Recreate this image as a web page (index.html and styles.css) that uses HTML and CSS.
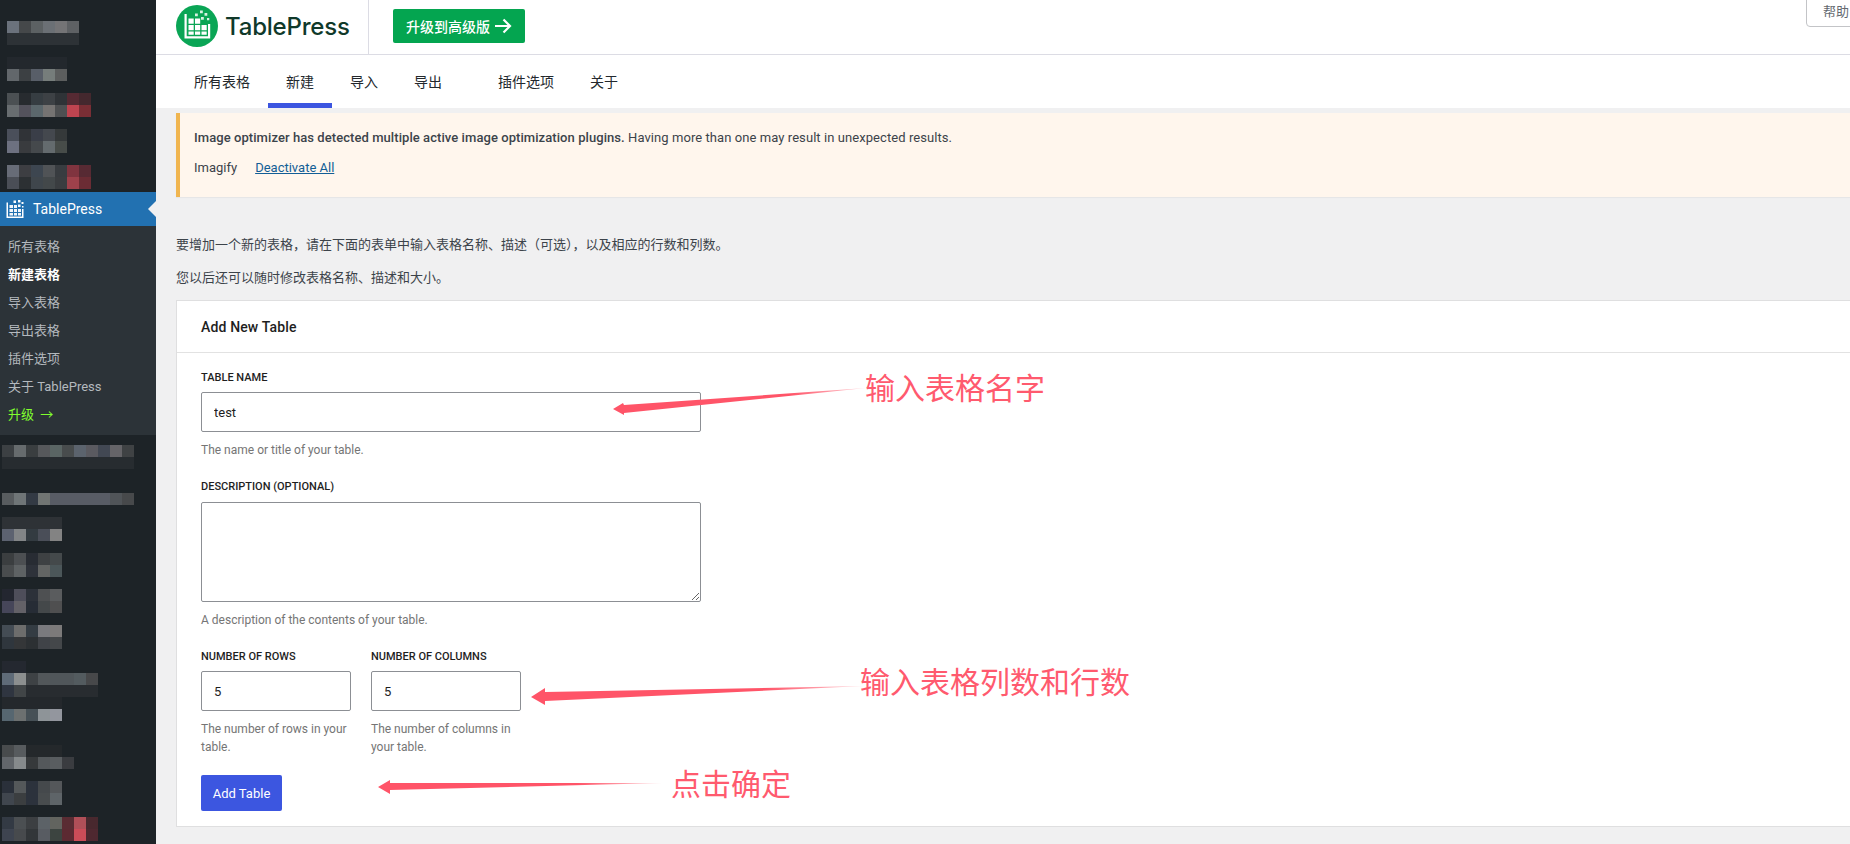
FILE: index.html
```html
<!DOCTYPE html>
<html lang="zh-CN">
<head>
  <meta charset="UTF-8" />
  <meta name="viewport" content="width=device-width, initial-scale=1.0"/>
  <title>新建表格 - TablePress</title>
  <link rel="stylesheet" href="styles.css">
</head>
<body>
  <aside class="sidebar">
    <svg class="mosaic" width="156" height="192" viewBox="0 0 156 192">
      <rect x="7" y="21" width="12" height="12" fill="#6b727c"/><rect x="19" y="21" width="12" height="12" fill="#45484a"/><rect x="31" y="21" width="12" height="12" fill="#5c6163"/><rect x="43" y="21" width="12" height="12" fill="#6b7075"/><rect x="55" y="21" width="12" height="12" fill="#747476"/><rect x="67" y="21" width="12" height="12" fill="#5e6164"/>
      <rect x="7" y="33" width="72" height="12" fill="#2d3236"/>
      <rect x="7" y="57" width="60" height="12" fill="#23282d"/>
      <rect x="7" y="69" width="12" height="12" fill="#62676b"/><rect x="19" y="69" width="12" height="12" fill="#3c4043"/><rect x="31" y="69" width="12" height="12" fill="#585e68"/><rect x="43" y="69" width="12" height="12" fill="#767d7b"/><rect x="55" y="69" width="12" height="12" fill="#5c5e5e"/>
      <rect x="7" y="93" width="12" height="12" fill="#4b5053"/><rect x="19" y="93" width="12" height="12" fill="#272b2f"/><rect x="31" y="93" width="12" height="12" fill="#363d42"/><rect x="43" y="93" width="12" height="12" fill="#3d4145"/><rect x="55" y="93" width="12" height="12" fill="#2f3337"/><rect x="67" y="93" width="12" height="12" fill="#562a33"/><rect x="79" y="93" width="12" height="12" fill="#44282e"/>
      <rect x="7" y="105" width="12" height="12" fill="#686d70"/><rect x="19" y="105" width="12" height="12" fill="#53525c"/><rect x="31" y="105" width="12" height="12" fill="#5b676c"/><rect x="43" y="105" width="12" height="12" fill="#757372"/><rect x="55" y="105" width="12" height="12" fill="#4e5052"/><rect x="67" y="105" width="12" height="12" fill="#bf4450"/><rect x="79" y="105" width="12" height="12" fill="#7a2e35"/>
      <rect x="7" y="129" width="12" height="12" fill="#4a4f5a"/><rect x="19" y="129" width="12" height="12" fill="#303337"/><rect x="31" y="129" width="12" height="12" fill="#3a3e48"/><rect x="43" y="129" width="12" height="12" fill="#44484e"/><rect x="55" y="129" width="12" height="12" fill="#35393a"/>
      <rect x="7" y="141" width="12" height="12" fill="#6d7180"/><rect x="19" y="141" width="12" height="12" fill="#393b3e"/><rect x="31" y="141" width="12" height="12" fill="#45494c"/><rect x="43" y="141" width="12" height="12" fill="#646b6e"/><rect x="55" y="141" width="12" height="12" fill="#474c49"/>
      <rect x="7" y="165" width="12" height="12" fill="#676c77"/><rect x="19" y="165" width="12" height="12" fill="#3d3e42"/><rect x="31" y="165" width="12" height="12" fill="#3d4650"/><rect x="43" y="165" width="12" height="12" fill="#505356"/><rect x="55" y="165" width="12" height="12" fill="#383c40"/><rect x="67" y="165" width="12" height="12" fill="#80343f"/><rect x="79" y="165" width="12" height="12" fill="#572a33"/>
      <rect x="7" y="177" width="12" height="12" fill="#4a4e56"/><rect x="19" y="177" width="12" height="12" fill="#2c3033"/><rect x="31" y="177" width="12" height="12" fill="#3f464c"/><rect x="43" y="177" width="12" height="12" fill="#43484a"/><rect x="55" y="177" width="12" height="12" fill="#3a3d40"/><rect x="67" y="177" width="12" height="12" fill="#9e414b"/><rect x="79" y="177" width="12" height="12" fill="#6b2c34"/>
    </svg>

    <div class="menu-current">
      <svg class="menu-icon" width="18" height="18" viewBox="0 0 18 18">
        <path d="M0.500 2.500h1.500v14h14V9h1.500v9H.5z" fill="#fff"/>
        <path d="M3.500 5h3.500v3H3.500zM8 5h3v3H8zM3.500 9h3.500v3H3.500zM8 9h3v3H8zM12 9h3v3h-3zM3.500 13h3.500v2.500H3.500zM8 13h3v2.500H8zM12 13h3v2.500h-3z" fill="#f2f6fa"/>
        <path d="M7.500 .5h2.500v2.500H7.500zM12 0h2.500v2.500H12zM15.500 2h2v2h-2zM12 4.500h2.500V7H12zM16 6h1.500v1.500H16z" fill="#fff"/>
      </svg>
      <span>TablePress</span>
    </div>
    <ul class="submenu">
      <li>所有表格</li>
      <li class="current">新建表格</li>
      <li>导入表格</li>
      <li>导出表格</li>
      <li>插件选项</li>
      <li>关于 TablePress</li>
      <li class="upgrade">升级 <span class="upgrade-arrow">→</span></li>
    </ul>

    <svg class="mosaic" width="156" height="409" viewBox="0 435 156 409">
      <rect x="2" y="445" width="12" height="12" fill="#3c4043"/><rect x="14" y="445" width="12" height="12" fill="#666b6d"/><rect x="26" y="445" width="12" height="12" fill="#3a3e40"/><rect x="38" y="445" width="12" height="12" fill="#56585b"/><rect x="50" y="445" width="12" height="12" fill="#5a6564"/><rect x="62" y="445" width="12" height="12" fill="#484c4d"/><rect x="74" y="445" width="12" height="12" fill="#5b636d"/><rect x="86" y="445" width="12" height="12" fill="#5a5a60"/><rect x="98" y="445" width="12" height="12" fill="#424853"/><rect x="110" y="445" width="12" height="12" fill="#656468"/><rect x="122" y="445" width="12" height="12" fill="#3f4244"/>
      <rect x="2" y="457" width="132" height="12" fill="#272c30"/>
      <rect x="2" y="493" width="12" height="12" fill="#585c5f"/><rect x="14" y="493" width="12" height="12" fill="#6f7577"/><rect x="26" y="493" width="12" height="12" fill="#333a44"/><rect x="38" y="493" width="12" height="12" fill="#717573"/><rect x="50" y="493" width="60" height="12" fill="#585c65"/><rect x="110" y="493" width="12" height="12" fill="#505458"/><rect x="122" y="493" width="12" height="12" fill="#47494b"/>
      <rect x="2" y="517" width="60" height="12" fill="#2e3236"/>
      <rect x="2" y="529" width="12" height="12" fill="#5c6270"/><rect x="14" y="529" width="12" height="12" fill="#828587"/><rect x="26" y="529" width="12" height="12" fill="#333b41"/><rect x="38" y="529" width="12" height="12" fill="#4a4e58"/><rect x="50" y="529" width="12" height="12" fill="#838383"/>
      <rect x="2" y="553" width="12" height="12" fill="#3b3e40"/><rect x="14" y="553" width="12" height="12" fill="#4c4f52"/><rect x="26" y="553" width="12" height="12" fill="#282c33"/><rect x="38" y="553" width="12" height="12" fill="#3e4143"/><rect x="50" y="553" width="12" height="12" fill="#44494b"/>
      <rect x="2" y="565" width="12" height="12" fill="#494c4e"/><rect x="14" y="565" width="12" height="12" fill="#5e6264"/><rect x="26" y="565" width="12" height="12" fill="#2e323a"/><rect x="38" y="565" width="12" height="12" fill="#636564"/><rect x="50" y="565" width="12" height="12" fill="#4b5659"/>
      <rect x="2" y="589" width="12" height="12" fill="#232630"/><rect x="14" y="589" width="12" height="12" fill="#4e4e5a"/><rect x="26" y="589" width="12" height="12" fill="#2c3139"/><rect x="38" y="589" width="12" height="12" fill="#4e5052"/><rect x="50" y="589" width="12" height="12" fill="#5a5c5e"/>
      <rect x="2" y="601" width="12" height="12" fill="#464659"/><rect x="14" y="601" width="12" height="12" fill="#636167"/><rect x="26" y="601" width="12" height="12" fill="#262c35"/><rect x="38" y="601" width="12" height="12" fill="#44484a"/><rect x="50" y="601" width="12" height="12" fill="#4f4f50"/>
      <rect x="2" y="625" width="12" height="12" fill="#444c54"/><rect x="14" y="625" width="12" height="12" fill="#6d6d6c"/><rect x="26" y="625" width="12" height="12" fill="#343c43"/><rect x="38" y="625" width="12" height="12" fill="#7a7a7e"/><rect x="50" y="625" width="12" height="12" fill="#7c7a7a"/>
      <rect x="2" y="637" width="12" height="12" fill="#2f363d"/><rect x="14" y="637" width="12" height="12" fill="#343638"/><rect x="26" y="637" width="12" height="12" fill="#2c3033"/><rect x="38" y="637" width="12" height="12" fill="#404348"/><rect x="50" y="637" width="12" height="12" fill="#44474a"/>
      <rect x="2" y="661" width="24" height="12" fill="#242830"/>
      <rect x="2" y="673" width="12" height="12" fill="#5f6b78"/><rect x="14" y="673" width="12" height="12" fill="#8c8f8f"/><rect x="26" y="673" width="12" height="12" fill="#3e4245"/><rect x="38" y="673" width="12" height="12" fill="#52575a"/><rect x="50" y="673" width="24" height="12" fill="#50565a"/><rect x="74" y="673" width="12" height="12" fill="#535b5f"/><rect x="86" y="673" width="12" height="12" fill="#47484a"/>
      <rect x="2" y="685" width="12" height="12" fill="#2f3540"/><rect x="14" y="685" width="12" height="12" fill="#414547"/><rect x="26" y="685" width="72" height="12" fill="#282c30"/>
      <rect x="2" y="697" width="60" height="12" fill="#24282c"/>
      <rect x="2" y="709" width="12" height="12" fill="#566670"/><rect x="14" y="709" width="12" height="12" fill="#6c7070"/><rect x="26" y="709" width="12" height="12" fill="#465056"/><rect x="38" y="709" width="12" height="12" fill="#8e9498"/><rect x="50" y="709" width="12" height="12" fill="#93969e"/>
      <rect x="2" y="745" width="12" height="12" fill="#484b4d"/><rect x="14" y="745" width="12" height="12" fill="#575b5e"/><rect x="26" y="745" width="36" height="12" fill="#24282b"/>
      <rect x="2" y="757" width="12" height="12" fill="#62666b"/><rect x="14" y="757" width="12" height="12" fill="#868a8c"/><rect x="26" y="757" width="12" height="12" fill="#36393b"/><rect x="38" y="757" width="12" height="12" fill="#54585b"/><rect x="50" y="757" width="12" height="12" fill="#595d60"/><rect x="62" y="757" width="12" height="12" fill="#3a3c40"/>
      <rect x="2" y="781" width="12" height="12" fill="#2a303a"/><rect x="14" y="781" width="12" height="12" fill="#54585a"/><rect x="26" y="781" width="12" height="12" fill="#2c323c"/><rect x="38" y="781" width="12" height="12" fill="#45494c"/><rect x="50" y="781" width="12" height="12" fill="#54575a"/>
      <rect x="2" y="793" width="12" height="12" fill="#40464e"/><rect x="14" y="793" width="12" height="12" fill="#3b3e40"/><rect x="26" y="793" width="12" height="12" fill="#2c323c"/><rect x="38" y="793" width="12" height="12" fill="#484c4e"/><rect x="50" y="793" width="12" height="12" fill="#5e6468"/>
      <rect x="2" y="817" width="12" height="12" fill="#333a44"/><rect x="14" y="817" width="12" height="12" fill="#4b4f52"/><rect x="26" y="817" width="12" height="12" fill="#3c3f42"/><rect x="38" y="817" width="12" height="12" fill="#5c6267"/><rect x="50" y="817" width="12" height="12" fill="#62645f"/><rect x="62" y="817" width="12" height="12" fill="#5a2c33"/><rect x="74" y="817" width="12" height="12" fill="#b04f58"/><rect x="86" y="817" width="12" height="12" fill="#48282e"/>
      <rect x="2" y="829" width="12" height="12" fill="#3e4450"/><rect x="14" y="829" width="12" height="12" fill="#474a4d"/><rect x="26" y="829" width="12" height="12" fill="#323639"/><rect x="38" y="829" width="12" height="12" fill="#585c62"/><rect x="50" y="829" width="12" height="12" fill="#3c4440"/><rect x="62" y="829" width="12" height="12" fill="#5c2a32"/><rect x="74" y="829" width="12" height="12" fill="#cb4c58"/><rect x="86" y="829" width="12" height="12" fill="#4e2830"/>
    </svg>
  </aside>

  <div class="main">
    <header class="topbar">
      <div class="brand">
        <svg class="logo" width="42" height="42" viewBox="0 0 42 42">
          <circle cx="21" cy="21" r="21" fill="#0aa555"/>
          <path d="M8.500 9h2.200v22.300H32V19h2.200v14.500H8.500z" fill="#fff"/>
          <path d="M12.500 13.500h5.200v5.200h-5.200zM19 13.500h5.200v5.200H19zM12.500 20h5.200v5.200h-5.200zM19 20h5.200v5.200H19zM25.500 20h5.200v5.200h-5.200zM12.500 26.500h5.200v3.200h-5.200zM19 26.500h5.200v3.200H19zM25.500 26.500h5.200v3.200h-5.200z" fill="#fff"/>
          <path d="M19 8.500h2.800v2.800H19zM24 5.500h2.800v2.800H24zM28.500 8h2.800v2.800h-2.800zM25 12h2.800v2.800H25zM31 13h2.300v2.300H31z" fill="#d8f2e3"/>
        </svg>
        <span class="brand-name">TablePress</span>
      </div>
      <a class="btn-upgrade">升级到高级版
        <svg width="17" height="16" viewBox="0 0 17 16"><path d="M0 8h15M8.500 1.500 15 8l-6.500 6.500" fill="none" stroke="#fff" stroke-width="2.200"/></svg>
      </a>
      <div class="help-tab">帮助</div>
    </header>

    <nav class="tabs">
      <a class="tab">所有表格</a>
      <a class="tab active">新建</a>
      <a class="tab">导入</a>
      <a class="tab">导出</a>
      <span class="tab-gap"></span>
      <a class="tab">插件选项</a>
      <a class="tab">关于</a>
    </nav>

    <div class="content">
      <div class="notice">
        <p class="notice-msg"><strong>Image optimizer has detected multiple active image optimization plugins.</strong> Having more than one may result in unexpected results.</p>
        <p class="notice-row"><span>Imagify</span><a href="#">Deactivate All</a></p>
      </div>

      <p class="intro first">要增加一个新的表格，请在下面的表单中输入表格名称、描述（可选），以及相应的行数和列数。</p>
      <p class="intro second">您以后还可以随时修改表格名称、描述和大小。</p>

      <section class="card">
        <h2 class="card-title">Add New Table</h2>
        <form class="card-body">
          <label class="field-label" for="tableName">Table Name</label>
          <input class="input wide" id="tableName" type="text" value="test" />
          <p class="help">The name or title of your table.</p>

          <label class="field-label gap" for="tableDesc">Description (optional)</label>
          <textarea class="input wide area" id="tableDesc"></textarea>
          <p class="help">A description of the contents of your table.</p>

          <div class="size-row">
            <div class="size-col">
              <label class="field-label" for="rows">Number of Rows</label>
              <input class="input" id="rows" type="text" value="5" />
              <p class="help">The number of rows in your table.</p>
            </div>
            <div class="size-col">
              <label class="field-label" for="cols">Number of Columns</label>
              <input class="input" id="cols" type="text" value="5" />
              <p class="help">The number of columns in your table.</p>
            </div>
          </div>

          <button class="btn-add" type="button">Add Table</button>
        </form>
      </section>
    </div>
  </div>

  <!-- annotations drawn on top of the screenshot -->
  <svg class="arrows" width="1850" height="844" viewBox="0 0 1850 844">
    <defs>
      <linearGradient id="fade" x1="0" x2="1" y1="0" y2="0">
        <stop offset="0" stop-color="#ff5468"/>
        <stop offset=".7" stop-color="#ff5468"/>
        <stop offset="1" stop-color="#ff5468" stop-opacity=".25"/>
      </linearGradient>
    </defs>
    <polygon points="613,409 623,403 624,405 866,388 624,413 624,415" fill="url(#fade)"/>
    <polygon points="531,697 545,688 545,692 864,686 545,701 545,705" fill="url(#fade)"/>
    <polygon points="378,787 390,780 390,783 662,783 390,790 390,794" fill="url(#fade)"/>
  </svg>
  <div class="note note-name">输入表格名字</div>
  <div class="note note-size">输入表格列数和行数</div>
  <div class="note note-ok">点击确定</div>
</body>
</html>
```

FILE: styles.css
```css
* {
  box-sizing: border-box;
}
html, body {
  height: 844px;
  overflow: hidden;
}
body {
  margin: 0;
  display: flex;
  background: #f0f0f1;
  color: #3c434a;
  font-family: Roboto, "Noto Sans CJK SC", sans-serif;
  font-size: 13px;
}
p {
  margin: 0;
}

/* sidebar */
.sidebar {
  width: 156px;
  flex: none;
  background: #1d2327;
  display: flex;
  flex-direction: column;
}
.mosaic {
  display: block;
  flex: none;
}
.menu-current {
  position: relative;
  height: 34px;
  background: #2271b1;
  color: #fff;
  display: flex;
  align-items: center;
  gap: 9px;
  padding-left: 6px;
  font-size: 14px;
}
.menu-current::after {
  content: "";
  position: absolute;
  right: 0;
  top: 9px;
  border: 8px solid transparent;
  border-right-color: #f0f0f1;
}
.submenu {
  list-style: none;
  margin: 0;
  padding: 7px 0 6px 8px;
  height: 209px;
  background: #2c3338;
  color: #b4b9be;
}
.submenu li {
  height: 28px;
  line-height: 28px;
}
.submenu .current {
  color: #fff;
  font-weight: 700;
}
.submenu .upgrade {
  color: #80ff2e;
}
.upgrade-arrow {
  margin-left: 3px;
}

/* header */
.main {
  flex: 1;
  min-width: 0;
}
.topbar {
  position: relative;
  height: 55px;
  background: #fff;
  border-bottom: 1px solid #dcdce4;
  display: flex;
  align-items: flex-start;
  padding-left: 20px;
}
.brand {
  display: flex;
  align-items: center;
  gap: 7px;
  height: 54px;
  width: 193px;
  padding-bottom: 2px;
  border-right: 1px solid #dcdce4;
}
.brand-name {
  font-family: Inter, sans-serif;
  font-size: 24px;
  font-weight: 500;
  letter-spacing: -.2px;
  color: #10392a;
}
.btn-upgrade {
  display: flex;
  align-items: center;
  gap: 5px;
  height: 34px;
  margin: 9px 0 0 24px;
  padding: 0 13px;
  background: #04a550;
  border-radius: 2px;
  color: #fff;
  font-size: 14px;
  font-weight: 500;
}
.help-tab {
  position: absolute;
  right: -6px;
  top: -1px;
  width: 50px;
  height: 28px;
  padding-left: 16px;
  line-height: 24px;
  background: #fff;
  border: 1px solid #c3c4c7;
  border-radius: 0 0 4px 4px;
  color: #646970;
}

/* tabs */
.tabs {
  height: 53px;
  padding-left: 20px;
  background: #fff;
  display: flex;
}
.tab {
  height: 53px;
  padding: 0 18px;
  line-height: 54px;
  font-size: 14px;
  color: #23282d;
}
.tab.active {
  border-bottom: 5px solid #3c55e0;
}
.tab-gap {
  width: 20px;
}

/* content */
.content {
  padding: 5px 0 0 20px;
}
.notice {
  height: 84px;
  padding: 16px 0 0 14px;
  background: #fff6ed;
  border-left: 4px solid #f0b54f;
  box-shadow: 0 1px 1px rgba(0, 0, 0, .04);
  line-height: 18px;
}
.notice-msg {
  letter-spacing: .07px;
}
.notice strong {
  font-weight: 500;
}
.notice-row {
  margin-top: 12px;
  display: flex;
  gap: 18px;
}
.notice-row a {
  color: #135e96;
}
.intro {
  height: 18px;
  line-height: 18px;
}
.intro.first {
  margin-top: 39px;
}
.intro.second {
  margin: 15px 0 13px;
}

/* card */
.card {
  margin-right: -5px;
  height: 527px;
  background: #fff;
  border: 1px solid #dfdfe0;
}
.card-title {
  margin: 0;
  height: 52px;
  padding-left: 24px;
  line-height: 52px;
  font-size: 14px;
  font-weight: 500;
  letter-spacing: .15px;
  color: #1e1e1e;
  border-bottom: 1px solid #e2e2e2;
}
.card-body {
  padding: 15px 24px 0;
}
.field-label {
  display: block;
  height: 24px;
  line-height: 20px;
  font-size: 11px;
  font-weight: 500;
  text-transform: uppercase;
  color: #1e1e1e;
}
.field-label.gap {
  height: 25px;
  margin-top: 18px;
}
.input {
  display: block;
  width: 150px;
  height: 40px;
  padding: 1px 12px 0;
  border: 1px solid #8c8f94;
  border-radius: 2px;
  background: #fff;
  color: #1e1e1e;
  font-family: inherit;
  font-size: 13px;
}
.input.wide {
  width: 500px;
}
.input.area {
  height: 100px;
}
.help {
  margin-top: 9px;
  line-height: 18px;
  font-size: 12px;
  color: #757575;
}
.size-row {
  display: flex;
  gap: 20px;
  margin-top: 18px;
}
.size-col {
  width: 150px;
}
.btn-add {
  display: block;
  width: 81px;
  height: 36px;
  margin-top: 19px;
  border: 0;
  border-radius: 2px;
  background: #3c56e0;
  color: #fff;
  font-family: inherit;
  font-size: 13px;
}

/* annotations */
.arrows {
  position: absolute;
  left: 0;
  top: 0;
  pointer-events: none;
}
.note {
  position: absolute;
  color: #ff5a6e;
  font-family: "Noto Sans CJK SC", sans-serif;
  font-size: 30px;
  line-height: 40px;
  white-space: nowrap;
}
.note-name {
  left: 865px;
  top: 366px;
}
.note-size {
  left: 860px;
  top: 660px;
}
.note-ok {
  left: 671px;
  top: 762px;
}
```
